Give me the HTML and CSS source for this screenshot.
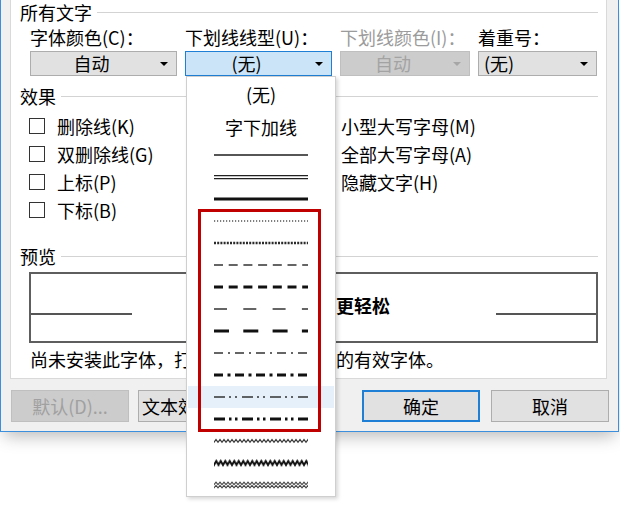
FILE: index.html
```html
<!DOCTYPE html>
<html lang="zh-CN">
<head>
<meta charset="utf-8">
<title>字体</title>
<link rel="stylesheet" href="styles.css">
</head>
<body>
<div class="dialog">
  <div class="panel">
    <div class="grp">所有文字</div>
    <div class="font-grid">
      <div class="lbl">字体颜色(C)：</div>
      <div class="lbl">下划线线型(U)：</div>
      <div class="lbl dis">下划线颜色(I)：</div>
      <div class="lbl">着重号：</div>
      <div class="combo"><span class="val">自动</span><span class="arr"></span></div>
      <div class="combo open"><span class="val">(无)</span><span class="arr"></span></div>
      <div class="combo disabled"><span class="val">自动</span><span class="arr"></span></div>
      <div class="combo left"><span class="val">(无)</span><span class="arr"></span></div>
    </div>
    <div class="grp g2">效果</div>
    <div class="effects">
      <div class="chk"><span class="box"></span>删除线(K)</div>
      <div class="chk"><span class="box"></span>小型大写字母(M)</div>
      <div class="chk"><span class="box"></span>双删除线(G)</div>
      <div class="chk"><span class="box"></span>全部大写字母(A)</div>
      <div class="chk"><span class="box"></span>上标(P)</div>
      <div class="chk"><span class="box"></span>隐藏文字(H)</div>
      <div class="chk"><span class="box"></span>下标(B)</div>
    </div>
    <div class="grp g3">预览</div>
    <div class="preview">
      <div class="pv-row">
        <div class="pv-line"></div>
        <div class="pv-text">让文档编辑更轻松</div>
        <div class="pv-line r"></div>
      </div>
    </div>
    <div class="note">尚未安装此字体，打印时将使用最相近的有效字体。</div>
  </div>
  <div class="btns">
    <div class="btn dis">默认(D)...</div>
    <div class="btn fx">文本效果(E)...</div>
    <div class="btn def ok">确定</div>
    <div class="btn cancel">取消</div>
  </div>
</div>

<div class="drop">
  <div class="it t1">(无)</div>
  <div class="it t2">字下加线</div>
  <div class="ln"><svg viewBox="0 0 94 10" width="94" height="10"><line x1="0" y1="5" x2="94" y2="5" stroke="#1e1e1e" stroke-width="1.5"/></svg></div>
  <div class="ln"><svg viewBox="0 0 94 10" width="94" height="10"><line x1="0" y1="3.6" x2="94" y2="3.6" stroke="#222" stroke-width="1.2"/><line x1="0" y1="6.6" x2="94" y2="6.6" stroke="#222" stroke-width="1.2"/></svg></div>
  <div class="ln"><svg viewBox="0 0 94 10" width="94" height="10"><line x1="0" y1="5" x2="94" y2="5" stroke="#111" stroke-width="3"/></svg></div>
  <div class="ln"><svg viewBox="0 0 94 10" width="94" height="10"><line x1="0" y1="5" x2="94" y2="5" stroke="#555" stroke-width="1.3" stroke-dasharray="1.2 1.8"/></svg></div>
  <div class="ln"><svg viewBox="0 0 94 10" width="94" height="10"><line x1="0" y1="5" x2="94" y2="5" stroke="#2a2a2a" stroke-width="2.4" stroke-dasharray="2 1.2"/></svg></div>
  <div class="ln"><svg viewBox="0 0 94 10" width="94" height="10"><line x1="0" y1="5" x2="94" y2="5" stroke="#333" stroke-width="1.5" stroke-dasharray="9 5.7"/></svg></div>
  <div class="ln"><svg viewBox="0 0 94 10" width="94" height="10"><line x1="0" y1="5" x2="94" y2="5" stroke="#111" stroke-width="3" stroke-dasharray="9 5.7"/></svg></div>
  <div class="ln"><svg viewBox="0 0 94 10" width="94" height="10"><line x1="0" y1="5" x2="94" y2="5" stroke="#333" stroke-width="1.5" stroke-dasharray="13 16.3"/></svg></div>
  <div class="ln"><svg viewBox="0 0 94 10" width="94" height="10"><line x1="0" y1="5" x2="94" y2="5" stroke="#111" stroke-width="3" stroke-dasharray="15 14.3"/></svg></div>
  <div class="ln"><svg viewBox="0 0 94 10" width="94" height="10"><line x1="0" y1="5" x2="94" y2="5" stroke="#333" stroke-width="1.5" stroke-dasharray="9 5 2 5"/></svg></div>
  <div class="ln"><svg viewBox="0 0 94 10" width="94" height="10"><line x1="0" y1="5" x2="94" y2="5" stroke="#111" stroke-width="3" stroke-dasharray="9 4.5 3 4.5"/></svg></div>
  <div class="ln hot"><svg viewBox="0 0 94 10" width="94" height="10"><line x1="0" y1="5" x2="94" y2="5" stroke="#333" stroke-width="1.5" stroke-dasharray="11 4 2 4 2 5"/></svg></div>
  <div class="ln"><svg viewBox="0 0 94 10" width="94" height="10"><line x1="0" y1="5" x2="94" y2="5" stroke="#111" stroke-width="3" stroke-dasharray="11 4 2.5 3.5 2.5 4.5"/></svg></div>
  <div class="ln"><svg viewBox="0 0 94 10" width="94" height="10"><defs><pattern id="wv1" width="4" height="10" patternUnits="userSpaceOnUse"><path d="M-2 3.6 L0 6.2 L2 3.6 L4 6.2 L6 3.6" fill="none" stroke="#3a3a3a" stroke-width="1.2"/></pattern></defs><rect width="94" height="10" fill="url(#wv1)"/></svg></div>
  <div class="ln"><svg viewBox="0 0 94 10" width="94" height="10"><defs><pattern id="wv2" width="4.5" height="10" patternUnits="userSpaceOnUse"><path d="M-2.25 3 L0 7 L2.25 3 L4.5 7 L6.75 3" fill="none" stroke="#111" stroke-width="1.9"/></pattern></defs><rect width="94" height="10" fill="url(#wv2)"/></svg></div>
  <div class="ln"><svg viewBox="0 0 94 10" width="94" height="10"><defs><pattern id="wv3" width="4" height="10" patternUnits="userSpaceOnUse"><path d="M-2 2.2 L0 4.6 L2 2.2 L4 4.6 L6 2.2" fill="none" stroke="#444" stroke-width="1.1"/><path d="M-2 5.4 L0 7.8 L2 5.4 L4 7.8 L6 5.4" fill="none" stroke="#444" stroke-width="1.1"/></pattern></defs><rect width="94" height="10" fill="url(#wv3)"/></svg></div>
  <div class="red"></div>
</div>
</body>
</html>
```

FILE: styles.css
```css
* { box-sizing: border-box; }

html, body { margin: 0; }

body {
  width: 620px;
  height: 506px;
  overflow: hidden;
  position: relative;
  background: #fff;
  color: #000;
  font-family: "Noto Sans CJK SC", "Noto Sans", sans-serif;
  font-size: 18px;
}

.dialog {
  width: 619px;
  height: 432px;
  background: #f0f0f0;
  border: 1px solid #3c8fdd;
  border-top: 0;
  padding: 0 11px 0 9px;
  box-shadow: 0 8px 16px -4px rgba(0, 0, 0, 0.28);
  display: flex;
  flex-direction: column;
}

.panel {
  background: #fff;
  border: 1px solid #d9d9d9;
  border-top: 0;
  height: 379px;
  padding: 0 8px 0 9px;
  flex: none;
}

.grp {
  display: flex;
  align-items: center;
  height: 24px;
  line-height: 24px;
  white-space: nowrap;
}
.grp::after {
  content: "";
  flex: 1;
  height: 1px;
  margin: 1px 0 0 5px;
  background: #d3d3d3;
}
.g2 { margin-top: 8px; }
.g3 { margin-top: 20px; }

.font-grid {
  display: grid;
  grid-template-columns: 147px 147px 130px 119px;
  grid-template-rows: 24px 25px;
  column-gap: 8px;
  row-gap: 2px;
  margin: 1px 0 0 10px;
}

.lbl { line-height: 24px; white-space: nowrap; }
.lbl.dis { color: #9b9b9b; }

.combo {
  height: 25px;
  display: flex;
  align-items: center;
  background: #e1e1e1;
  border: 1px solid #adadad;
  line-height: 23px;
  white-space: nowrap;
}
.combo .val { flex: 1; text-align: center; }
.combo .arr {
  width: 24px;
  height: 100%;
  display: flex;
  align-items: center;
  justify-content: center;
}
.combo .arr::after {
  content: "";
  border-left: 4px solid transparent;
  border-right: 4px solid transparent;
  border-top: 4px solid #000;
}
.combo.open { background: #cce4f7; border-color: #1f7fd4; }
.combo.disabled { background: #cccccc; border-color: #bfbfbf; color: #a3a3a3; }
.combo.disabled .arr::after { border-top-color: #a6a6a6; }
.combo.left .val { text-align: left; padding-left: 5px; }

.effects {
  display: grid;
  grid-template-columns: 284px 1fr;
  grid-auto-rows: 28px;
  margin: 4px 0 0 9px;
}
.chk {
  display: flex;
  align-items: center;
  gap: 12px;
  line-height: 24px;
  white-space: nowrap;
}
.chk .box {
  width: 16px;
  height: 16px;
  border: 1px solid #333;
  background: #fff;
  flex: none;
}

.preview {
  margin: 4px 0 0 9px;
  height: 71px;
  border: 2px solid #5e5e5e;
}
.pv-row {
  display: flex;
  align-items: flex-end;
  height: 41px;
}
.pv-line {
  flex: 0 0 101px;
  height: 2px;
  background: #555;
}
.pv-line.r { flex-basis: 100px; }
.pv-text {
  flex: 1;
  text-align: center;
  padding-left: 8px;
  font-weight: bold;
  line-height: 24px;
  margin-bottom: -2px;
  white-space: nowrap;
}

.note {
  margin: 4px 0 0 10px;
  line-height: 24px;
  white-space: nowrap;
}

.btns {
  display: flex;
  margin: 11px -2px 0 0;
  padding-left: 1px;
}
.btn {
  width: 118px;
  height: 32px;
  flex: none;
  display: flex;
  align-items: center;
  justify-content: center;
  background: #e1e1e1;
  border: 1px solid #adadad;
  line-height: 24px;
  white-space: nowrap;
}
.btn.dis { background: #cccccc; border-color: #bfbfbf; color: #a0a0a0; }
.btn.fx { margin-left: 9px; }
.btn.ok { margin-left: auto; }
.btn.def { border: 2px solid #1f7fd4; }
.btn.cancel { margin-left: 11px; }

/* open drop-down list of underline styles */
.drop {
  position: absolute;
  left: 186px;
  top: 76px;
  width: 150px;
  height: 421px;
  background: #fff;
  border: 1px solid #cfcfcf;
  box-shadow: 2px 2px 4px rgba(0, 0, 0, 0.16);
}
.drop .it {
  display: flex;
  align-items: center;
  justify-content: center;
  line-height: 24px;
  white-space: nowrap;
}
.drop .t1 { height: 33px; }
.drop .t2 { height: 34px; }
.drop .ln {
  height: 22px;
  display: flex;
  align-items: center;
  justify-content: center;
}
.drop .ln svg { display: block; }
.drop .ln.hot { background: #e5f0fb; margin: 0 1px; }

.red {
  position: absolute;
  left: 11px;
  top: 132px;
  width: 123px;
  height: 223px;
  border: 3px solid #c00000;
}
```
